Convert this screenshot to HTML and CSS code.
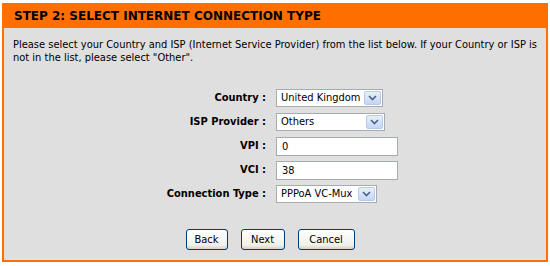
FILE: index.html
```html
<!DOCTYPE html>
<html>
<head>
<meta charset="utf-8">
<link rel="stylesheet" href="styles.css">
</head>
<body>
<div class="box">
  <div class="head">STEP 2: SELECT INTERNET CONNECTION TYPE</div>
  <div class="content">
    <p class="intro">Please select your Country and ISP (Internet Service Provider) from the list below. If your Country or ISP is not in the list, please select "Other".</p>
    <div class="form">
      <div class="label">Country :</div>
      <div class="ctl"><div class="select s-country"><span class="val">United Kingdom</span><span class="drop"><svg width="9" height="6" viewBox="0 0 9 6"><path d="M1 1 L4.5 4.5 L8 1" fill="none" stroke="#4d6185" stroke-width="1.6"/></svg></span></div></div>
      <div class="label">ISP Provider :</div>
      <div class="ctl"><div class="select s-isp"><span class="val">Others</span><span class="drop"><svg width="9" height="6" viewBox="0 0 9 6"><path d="M1 1 L4.5 4.5 L8 1" fill="none" stroke="#4d6185" stroke-width="1.6"/></svg></span></div></div>
      <div class="label">VPI :</div>
      <div class="ctl"><div class="input">0</div></div>
      <div class="label">VCI :</div>
      <div class="ctl"><div class="input">38</div></div>
      <div class="label">Connection Type :</div>
      <div class="ctl"><div class="select s-conn"><span class="val">PPPoA VC-Mux</span><span class="drop"><svg width="9" height="6" viewBox="0 0 9 6"><path d="M1 1 L4.5 4.5 L8 1" fill="none" stroke="#4d6185" stroke-width="1.6"/></svg></span></div></div>
    </div>
    <div class="buttons">
      <button class="btn b-back">Back</button>
      <button class="btn b-next">Next</button>
      <button class="btn b-cancel">Cancel</button>
    </div>
  </div>
</div>
</body>
</html>
```
FILE: styles.css
```css
html, body {
  margin: 0;
  padding: 0;
  background: #ffffff;
}
body {
  font-family: "DejaVu Sans Condensed", "DejaVu Sans", sans-serif;
  font-size: 11px;
  color: #000;
}
.box {
  margin: 3px 2px 0 2px;
  width: 542px;
  height: 257px;
  border: 2px solid #ff6f00;
  border-top: 0;
  background: #dfdfdf;
  display: flex;
  flex-direction: column;
}
.head {
  background: #ff6f00;
  height: 25px;
  line-height: 26px;
  padding-left: 10px;
  font-family: "DejaVu Sans", sans-serif;
  font-weight: bold;
  font-size: 12px;
  letter-spacing: 0;
  color: #000;
}
.content {
  padding: 10px 0 0 9px;
}
.intro {
  margin: 0;
  line-height: 13px;
  width: 525px;
}
.form {
  display: grid;
  grid-template-columns: 253px auto;
  column-gap: 10px;
  margin-top: 22px;
  align-items: center;
}
.label {
  text-align: right;
  font-weight: bold;
  height: 24px;
  line-height: 24px;
}
.ctl {
  height: 24px;
  display: flex;
  align-items: center;
}
.select {
  box-sizing: border-box;
  height: 18px;
  background: #fff;
  border: 1px solid #a5acb2;
  display: flex;
  align-items: stretch;
}
.select .val {
  flex: 1;
  padding-left: 4px;
  line-height: 16px;
  white-space: nowrap;
}
.select .drop {
  width: 17px;
  margin: 1px;
  box-sizing: border-box;
  border: 1px solid #b6c9ef;
  border-radius: 2px;
  background: linear-gradient(#e9f0fd, #c4d5f7);
  display: flex;
  align-items: center;
  justify-content: center;
}
.s-country { width: 107px; }
.s-isp { width: 109px; }
.s-conn { width: 101px; }
.input {
  box-sizing: border-box;
  width: 122px;
  height: 19px;
  background: #fff;
  border: 1px solid #a5acb2;
  padding-left: 5px;
  line-height: 17px;
}
.buttons {
  display: flex;
  justify-content: center;
  gap: 13px;
  margin-top: 23px;
  padding-right: 19px;
}
.btn {
  font-family: inherit;
  font-size: 11px;
  height: 21px;
  padding: 0;
  border: 1px solid #003c74;
  border-radius: 3px;
  background: linear-gradient(#ffffff, #f0f0ea 80%, #d6d0c5);
  color: #000;
}
.b-back { width: 42px; }
.b-next { width: 44px; }
.b-cancel { width: 57px; }
```
